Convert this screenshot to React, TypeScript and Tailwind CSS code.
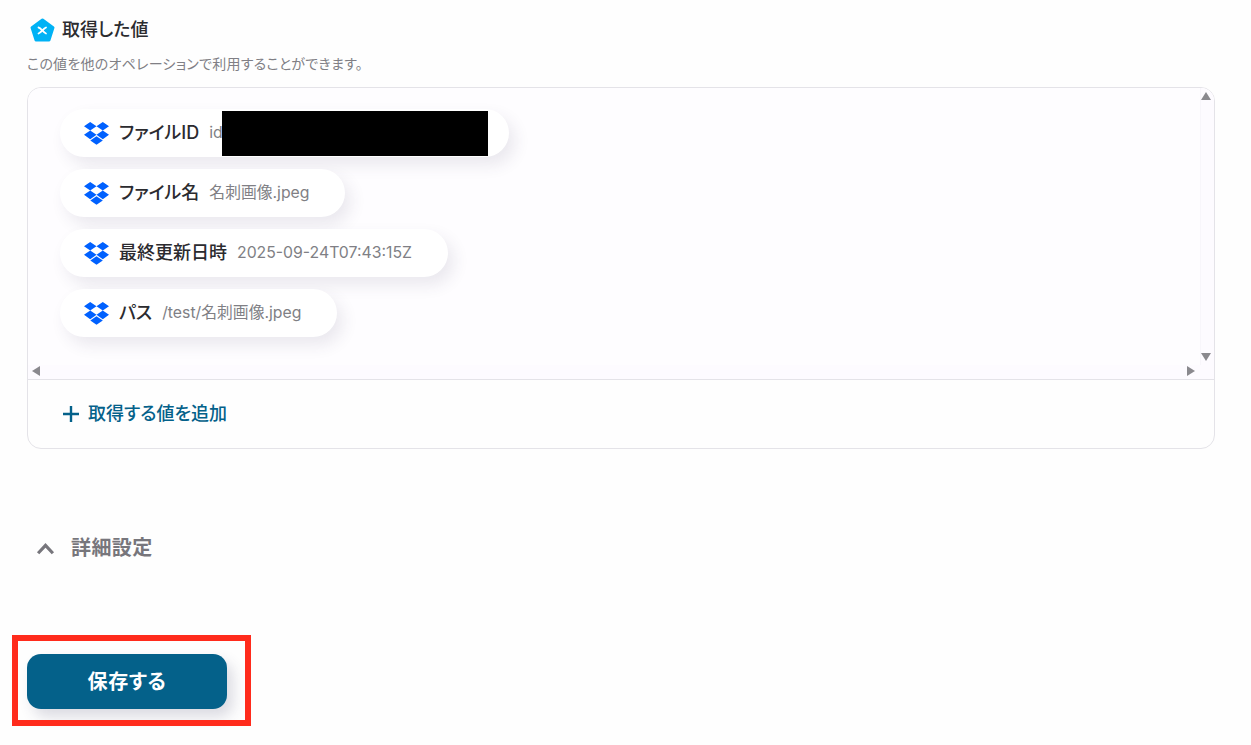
import React from "react";

const font = { fontFamily: '"Inter","Noto Sans CJK JP",sans-serif' };

function Dropbox() {
  return (
    <svg width="25" height="23" viewBox="0 0 25 22" preserveAspectRatio="none" className="shrink-0">
      <path fill="#0061ff" d="M6.2 0 0 4.100l6.200 4.100 6.300-4.100zM18.800 0l-6.300 4.100 6.300 4.100L25 4.100zM0 12.300l6.200 4.100 6.300-4.100-6.300-4.100zM18.800 8.200l-6.300 4.100 6.300 4.100 6.200-4.100zM6.300 17.700l6.200 4.100 6.300-4.100-6.300-4.100z" />
    </svg>
  );
}

function Pill({ label, value, children, w }: { label: string; value?: string; children?: React.ReactNode; w: string }) {
  return (
    <div className={`relative flex h-12 items-center rounded-full bg-white pl-6 shadow-[6px_8px_16px_rgba(60,50,90,0.10)] ${w}`}>
      <Dropbox />
      <span className="ml-[10px] text-[18px] font-medium leading-none text-[#2b2b2f]">{label}</span>
      {value && <span className="ml-[10px] whitespace-nowrap text-[15.8px] leading-none text-[#807f85]">{value}</span>}
      {children}
    </div>
  );
}

export default function App() {
  return (
    <div style={font} className="relative h-[745px] w-[1251px] overflow-hidden bg-[#fefefe] [font-feature-settings:'palt']">
      <div className="px-[27px] pt-[17px]">
        <div className="flex items-center gap-[7px] pl-[3px]">
          <svg width="25" height="25" viewBox="0 0 25 25">
            <path fill="#00b2f5" stroke="#00b2f5" strokeWidth="3" strokeLinejoin="round" d="M12.500 2 23 9.600 19 22H6L2 9.600z" />
            <path fill="none" stroke="#fff" strokeWidth="1.800" strokeLinecap="round" d="M8.500 9.500c2.500 .5 5 5 7.500 6M16 9.500c-2.500 1-5 5-7.500 6" />
          </svg>
          <span className="text-[18px] font-medium leading-[26px] text-[#2b2b2f]">取得した値</span>
        </div>
        <p className="mt-[12px] text-[14px] leading-[18px] tracking-[0.25px] text-[#807f85]">この値を他のオペレーションで利用することができます。</p>

        <div className="mt-[14px] flex h-[362px] w-[1188px] flex-col overflow-hidden rounded-[14px] border border-[#e4e3e8]">
          <div className="relative h-[292px] border-b border-[#e4e3e8] bg-[#fefdff]">
            <div className="flex flex-col items-start gap-3 pl-[32px] pt-[21px]">
              <Pill label="ファイルID" value="id" w="w-[449px]">
                <div className="absolute left-[162px] top-[2px] h-[45px] w-[266px] bg-black" />
              </Pill>
              <Pill label="ファイル名" value="名刺画像.jpeg" w="w-[285px]" />
              <Pill label="最終更新日時" value="2025-09-24T07:43:15Z" w="w-[388px]" />
              <Pill label="パス" value="/test/名刺画像.jpeg" w="w-[277px]" />
            </div>
            <div className="absolute bottom-0 right-0 top-0 w-[14px] border-l border-[#f8f6fb] bg-[#fdfbff]" />
            <div className="absolute bottom-0 left-0 right-0 h-[14px] bg-[#fdfbff]" />
            <svg className="absolute right-[3px] top-[4px]" width="10" height="8" viewBox="0 0 10 8"><path fill="#8a898e" d="M5 0l5 8H0z" /></svg>
            <svg className="absolute bottom-[18px] right-[3px]" width="10" height="8" viewBox="0 0 10 8"><path fill="#8a898e" d="M0 0h10L5 8z" /></svg>
            <svg className="absolute bottom-[3px] left-[4px]" width="8" height="10" viewBox="0 0 8 10"><path fill="#8a898e" d="M8 0v10L0 5z" /></svg>
            <svg className="absolute bottom-[3px] right-[19px]" width="8" height="10" viewBox="0 0 8 10"><path fill="#8a898e" d="M0 0v10l8-5z" /></svg>
          </div>
          <div className="flex flex-1 items-center gap-[9px] pl-[35px]">
            <svg width="16" height="16" viewBox="0 0 16 16"><path fill="none" stroke="#04618a" strokeWidth="2.400" d="M8 0v16M0 8h16" /></svg>
            <span className="text-[18px] font-medium leading-none text-[#04618a]">取得する値を追加</span>
          </div>
        </div>

        <div className="mt-[86px] flex items-center gap-[16px] pl-[9px]">
          <svg width="19" height="13" viewBox="0 0 18 12"><path fill="none" stroke="#77767c" strokeWidth="3" d="M2 10.500 9 3l7 7.500" /></svg>
          <span className="text-[20px] font-semibold leading-[26px] tracking-[0.4px] text-[#77767c]">詳細設定</span>
        </div>

        <button className="mt-[93px] flex h-[55px] w-[200px] items-center justify-center rounded-[14px] bg-[#04618a] text-[20px] font-bold tracking-[0.6px] text-white shadow-[6px_8px_14px_rgba(60,60,100,0.18)]">
          保存する
        </button>
      </div>
      <div className="absolute left-[12px] top-[635px] h-[91px] w-[239px] border-[6px] border-[#ff2b1c]" />
    </div>
  );
}
